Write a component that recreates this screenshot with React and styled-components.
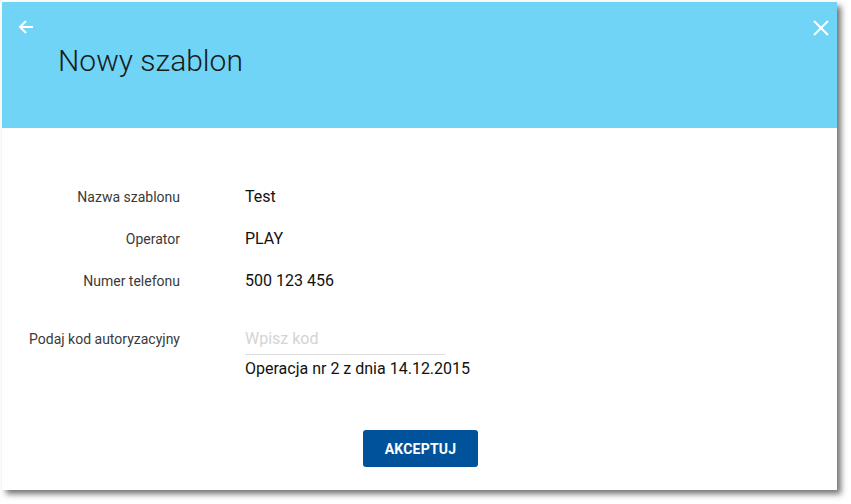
import React, { useState } from 'react';
import styled, { createGlobalStyle } from 'styled-components';

const GlobalStyle = createGlobalStyle`
    html, body {
        margin: 0;
        padding: 0;
        background: #ffffff;
        font-family: Roboto, "Noto Sans", Arial, sans-serif;
    }
`;

const Page = styled.div`
    width: 851px;
    height: 504px;
    padding: 2px 0 0 2px;
    box-sizing: border-box;
`;

const Dialog = styled.div`
    width: 835px;
    height: 488px;
    background: #ffffff;
    box-shadow: 4px 4px 6px rgba(0, 0, 0, 0.55);
    display: flex;
    flex-direction: column;
`;

const Header = styled.div`
    height: 126px;
    background: #70d4f6;
    position: relative;
    display: flex;
    align-items: flex-start;
    padding: 39px 0 0 56px;
    box-sizing: border-box;
`;

const IconButton = styled.button`
    position: absolute;
    top: ${p => p.top}px;
    ${p => p.side}: ${p => p.offset}px;
    width: 20px;
    height: 20px;
    padding: 0;
    border: none;
    background: transparent;
    cursor: pointer;
    display: flex;
    align-items: center;
    justify-content: center;
`;

const Title = styled.h1`
    margin: 0;
    font-size: 30px;
    font-weight: 300;
    line-height: 40px;
    color: #1a1a1a;
`;

const Body = styled.div`
    flex: 1;
    padding-top: 59px;
    display: flex;
    flex-direction: column;
`;

const Form = styled.div`
    display: grid;
    grid-template-columns: 178px 200px;
    column-gap: 65px;
    row-gap: 22px;
`;

const Label = styled.div`
    text-align: right;
    font-size: 14px;
    line-height: 20px;
    color: #3a3a3a;
    margin-top: ${p => p.offset || 0}px;
`;

const Value = styled.div`
    font-size: 16px;
    line-height: 20px;
    color: #111111;
`;

const AuthField = styled.div`
    margin-top: 16px;
    display: flex;
    flex-direction: column;
    white-space: nowrap;
`;

const CodeInput = styled.input`
    width: 200px;
    height: 26px;
    box-sizing: border-box;
    border: none;
    border-bottom: 1px solid #dddddd;
    outline: none;
    padding: 0 0 6px 0;
    font-family: inherit;
    font-size: 16px;
    color: #111111;
    background: transparent;

    &::placeholder {
        color: #d4d4d4;
    }
`;

const Hint = styled.div`
    margin-top: 4px;
    font-size: 16px;
    line-height: 20px;
    color: #111111;
`;

const Actions = styled.div`
    display: flex;
    justify-content: center;
    margin-top: 51px;
    padding-left: 2px;
`;

const SubmitButton = styled.button`
    width: 115px;
    height: 37px;
    border: none;
    border-radius: 3px;
    background: #00529b;
    color: #ffffff;
    font-family: inherit;
    font-size: 14px;
    font-weight: 700;
    letter-spacing: 0.2px;
    cursor: pointer;
`;

const App = () => {
    const [code, setCode] = useState('');

    return (
        <Page>
            <GlobalStyle />
            <Dialog>
                <Header>
                    <IconButton top={15} side="left" offset={14} aria-label="Wstecz">
                        <svg width="16" height="16" viewBox="0 0 16 16" fill="none" stroke="#ffffff" strokeWidth="2">
                            <path d="M15 8H2M8 2L2 8l6 6" />
                        </svg>
                    </IconButton>
                    <IconButton top={16} side="right" offset={6} aria-label="Zamknij">
                        <svg width="16" height="16" viewBox="0 0 16 16" fill="none" stroke="#ffffff" strokeWidth="2">
                            <path d="M1 1l14 14M15 1L1 15" />
                        </svg>
                    </IconButton>
                    <Title>Nowy szablon</Title>
                </Header>
                <Body>
                    <Form>
                        <Label>Nazwa szablonu</Label>
                        <Value>Test</Value>
                        <Label>Operator</Label>
                        <Value>PLAY</Value>
                        <Label>Numer telefonu</Label>
                        <Value>500 123 456</Value>
                        <Label offset={16}>Podaj kod autoryzacyjny</Label>
                        <AuthField>
                            <CodeInput
                                placeholder="Wpisz kod"
                                value={code}
                                onChange={e => setCode(e.target.value)}
                            />
                            <Hint>Operacja nr 2 z dnia 14.12.2015</Hint>
                        </AuthField>
                    </Form>
                    <Actions>
                        <SubmitButton type="button">AKCEPTUJ</SubmitButton>
                    </Actions>
                </Body>
            </Dialog>
        </Page>
    );
};

export default App;
